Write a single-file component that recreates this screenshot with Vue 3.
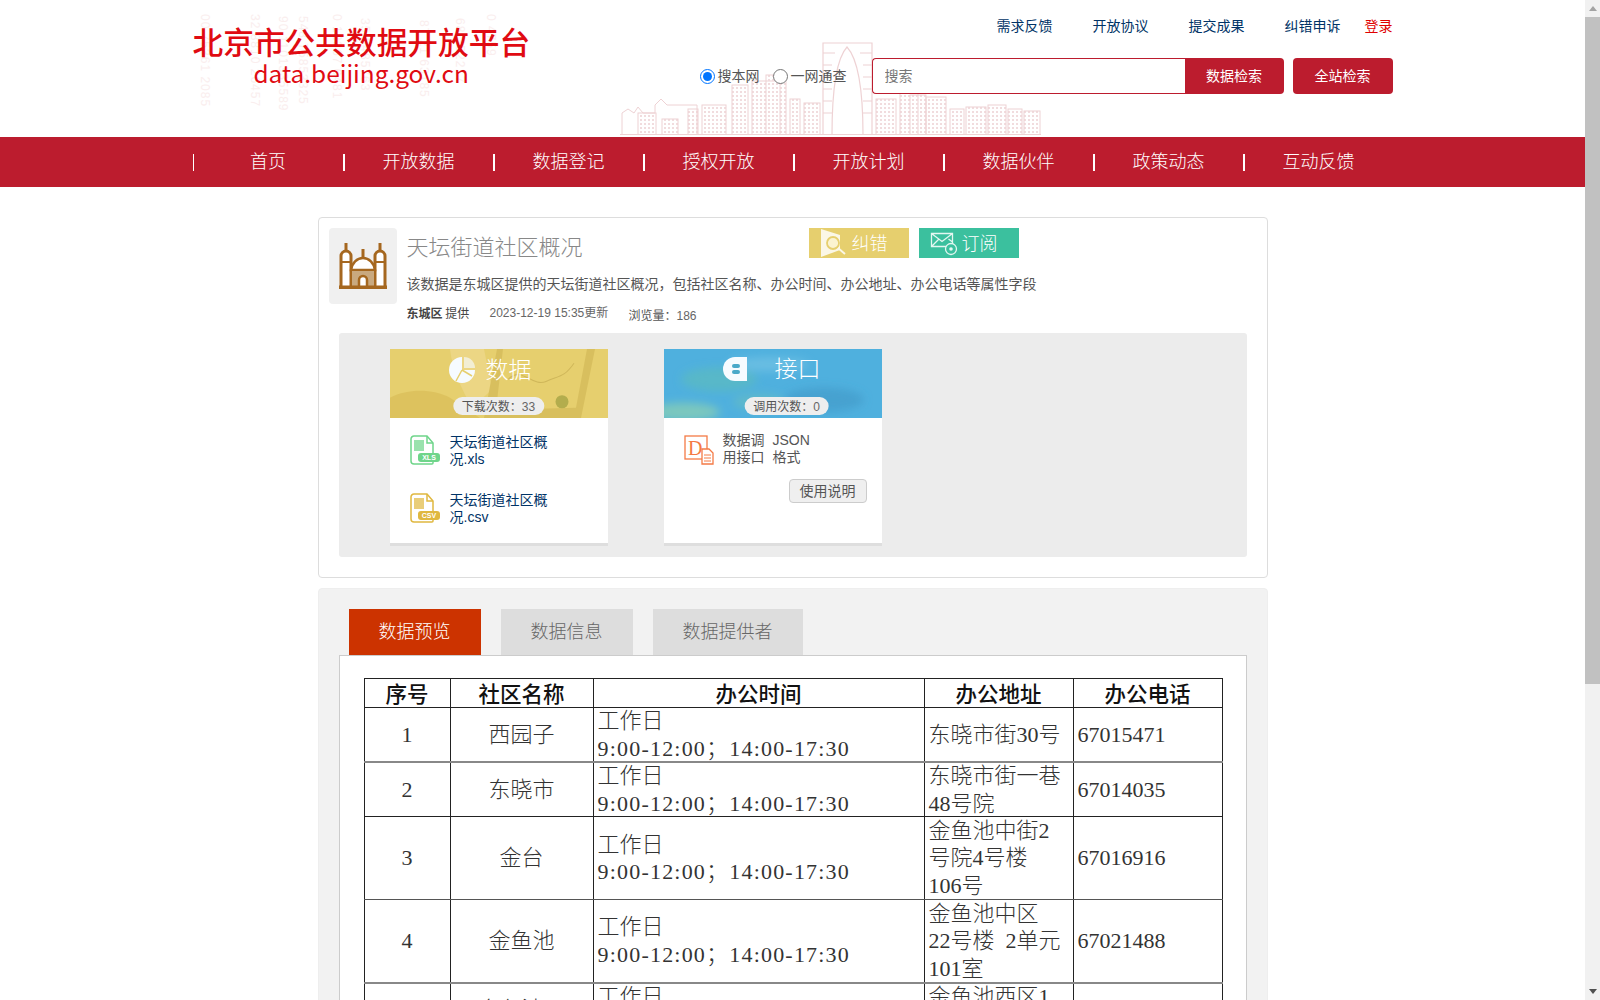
<template>
  <div class="page">
    <div class="main">
      <header class="top">
        <div class="top-inner">
          <!-- pale number streaks behind the logo -->
          <div class="streaks">
            <span v-for="s in streaks" :key="s.x" class="streak" :style="{ left: s.x + 'px', top: s.y + 'px' }">{{ s.t }}</span>
          </div>
          <svg class="skyline" viewBox="0 0 421 96" width="421" height="96">
            <defs>
              <pattern id="wins" width="4" height="4" patternUnits="userSpaceOnUse">
                <rect width="2" height="2" fill="#f1dcde" />
              </pattern>
            </defs>
            <rect v-for="(b, i) in buildings" :key="i" :x="b[0]" :y="b[1]" :width="b[2]" :height="96 - b[1]" fill="url(#wins)" stroke="#eed2d4" stroke-width="1" />
            <path d="M203 96V4h49v92M212 96C212 50 216 20 227 8C238 20 243 50 243 96M203 14h12M240 14h12M203 26h9M243 26h9M203 38h9M243 38h9M203 50h9M243 50h9M203 62h9M243 62h9M203 74h9M243 74h9" fill="#fff" stroke="#eed2d4" stroke-width="1.2" />
            <path d="M2 96V74l6-4 6 4 4-6 5 6h12V66l6-6 6 6h30v30M0 95.500h421" fill="none" stroke="#eed2d4" />
          </svg>

          <div class="logo">
            <div class="logo-cn">北京市公共数据开放平台</div>
            <div class="logo-en">data.beijing.gov.cn</div>
          </div>

          <div class="top-right">
            <nav class="links">
              <a v-for="l in topLinks" :key="l">{{ l }}</a>
              <a class="login">登录</a>
            </nav>
            <div class="search-row">
              <label class="radio"><input type="radio" name="scope" checked /><span>搜本网</span></label>
              <label class="radio"><input type="radio" name="scope" /><span>一网通查</span></label>
              <div class="search-box">
                <input type="text" placeholder="搜索" />
                <button>数据检索</button>
              </div>
              <button class="all-btn">全站检索</button>
            </div>
          </div>
        </div>
      </header>

      <div class="nav">
        <div class="nav-inner">
          <a v-for="n in navItems" :key="n">{{ n }}</a>
        </div>
      </div>

      <section class="card-top">
        <div class="intro">
          <div class="tile">
            <svg width="48" height="46" viewBox="0 0 48 46">
              <path d="M5.500 0h3v8h-3zM39.500 0h3v8h-3zM22.500 6h3v9h-3z" fill="#a5671f" />
              <path d="M2 44V13a5 5 0 0 1 10 0v31M36 44V13a5 5 0 0 1 10 0v31" fill="#fff" stroke="#a5671f" stroke-width="3" />
              <path d="M12 27c1-7 6-12 12-12s11 5 12 12z" fill="#fff" stroke="#a5671f" stroke-width="2.500" />
              <path d="M2 19h10M36 19h10" stroke="#a5671f" stroke-width="2" />
              <rect x="12" y="27" width="24" height="17" fill="#c9a97f" stroke="#a5671f" stroke-width="2" />
              <path d="M20 44V37a4 4 0 0 1 8 0v7" fill="#fff" stroke="#a5671f" stroke-width="2.500" />
              <rect x="0" y="42.500" width="48" height="3.500" fill="#a5671f" />
            </svg>
          </div>
          <div class="info">
            <div class="title-row">
              <h1>天坛街道社区概况</h1>
              <a class="act act-fix">
                <svg class="act-icon" width="30" height="30" viewBox="0 0 30 30">
                  <path d="M2 1l19 6v15L2 29z" fill="#fbf7e6" />
                  <circle cx="14" cy="15" r="6" fill="#fbf3d0" stroke="#e6cf6e" stroke-width="1.800" />
                  <path d="M19 20l7 6" stroke="#fbf7e6" stroke-width="2" />
                </svg>
                <span>纠错</span>
              </a>
              <a class="act act-sub">
                <svg class="act-icon" width="30" height="30" viewBox="0 0 30 30">
                  <path d="M2.500 5.500h21v13h-21zM2.500 5.500l10.500 8 10.500-8M2.500 18.500l7-7M23.500 14l-4-3" fill="none" stroke="#e4f7f1" stroke-width="1.300" />
                  <circle cx="22" cy="21" r="5.500" fill="#3bc09e" stroke="#e4f7f1" stroke-width="1.300" />
                  <circle cx="22" cy="21" r="1.800" fill="#e4f7f1" />
                </svg>
                <span>订阅</span>
              </a>
            </div>
            <p class="desc">该数据是东城区提供的天坛街道社区概况，包括社区名称、办公时间、办公地址、办公电话等属性字段</p>
            <div class="meta">
              <span class="org"><b>东城区</b> 提供</span>
              <span class="date">2023-12-19 15:35更新</span>
              <span class="views">浏览量：<b>186</b></span>
            </div>
          </div>
        </div>

        <div class="panel">
          <div class="res-card">
            <div class="res-head yellow">
              <svg class="res-bg" viewBox="0 0 218 68" preserveAspectRatio="none">
                <path d="M0 68V48c20-10 44-8 60 0l30 20z" fill="#ddc25e" />
                <path d="M60 0h34l8 40-20 18C72 40 62 20 60 0z" fill="#ecd684" />
                <path d="M107 0h98l-14 68H94z" fill="#d8bf5e" />
                <path d="M113 0h84l-11 58-80 2z" fill="#e6cf6e" />
                <path d="M118 30c14-14 24 8 38 2s18-4 28-18" fill="none" stroke="#cfb75a" />
                <circle cx="172" cy="52" r="6.500" fill="#b3ad4d" />
              </svg>
              <div class="res-title">
                <svg width="26" height="26" viewBox="0 0 26 26">
                  <path d="M13 0a13 13 0 1 0 13 13H13z" fill="#f6fbff" />
                  <path d="M15 0a11 11 0 0 1 11 11H15z" fill="#f6fbff" opacity=".65" />
                  <path d="M13 13l10 6M13 13L7 24" stroke="#e6cf6e" stroke-width="1.500" />
                </svg>
                <span>数据</span>
              </div>
              <div class="badge">下载次数：<b>33</b></div>
            </div>
            <div class="res-body">
              <a v-for="f in files" :key="f.ext" class="file-row">
                <svg width="30" height="30" viewBox="0 0 30 30">
                  <path d="M1 4a3 3 0 0 1 3-3h13l6 7v20a1 1 0 0 1-1 1H4a3 3 0 0 1-3-3z" fill="#fff" :stroke="f.color" stroke-width="1.500" />
                  <path d="M17 1v7h6" fill="none" :stroke="f.color" stroke-width="1.500" />
                  <rect x="4" y="5" width="10" height="11" :fill="f.color" opacity=".7" />
                  <rect x="8" y="18" width="22" height="9" rx="3" :fill="f.color" />
                  <text x="19" y="25" font-size="7" font-weight="700" text-anchor="middle" fill="#fff" font-family="Liberation Sans, sans-serif">{{ f.ext.toUpperCase() }}</text>
                </svg>
                <span class="file-name">天坛街道社区概况.{{ f.ext }}</span>
              </a>
            </div>
          </div>

          <div class="res-card">
            <div class="res-head blue">
              <svg class="res-bg" viewBox="0 0 218 68" preserveAspectRatio="none">
                <defs><filter id="blur1"><feGaussianBlur stdDeviation="4" /></filter></defs>
                <g filter="url(#blur1)">
                  <ellipse cx="55" cy="30" rx="38" ry="12" fill="#5fc0b4" opacity=".5" />
                  <ellipse cx="20" cy="62" rx="36" ry="9" fill="#8fd1b0" opacity=".7" />
                  <ellipse cx="160" cy="50" rx="40" ry="12" fill="#3f97c6" opacity=".6" />
                  <ellipse cx="105" cy="15" rx="40" ry="7" fill="#79c6e6" opacity=".6" />
                  <ellipse cx="95" cy="52" rx="26" ry="8" fill="#6ec2b8" opacity=".5" />
                </g>
              </svg>
              <div class="res-title">
                <svg width="24" height="24" viewBox="0 0 24 24">
                  <path d="M24 0H12A12 12 0 0 0 12 24h12z" fill="#f6fbff" />
                  <rect x="9" y="7" width="8" height="4" rx="2" fill="#4aa9c9" />
                  <rect x="9" y="13" width="8" height="4" rx="2" fill="#4aa9c9" />
                </svg>
                <span class="api-name">接口</span>
              </div>
              <div class="badge api-badge">调用次数：<b>0</b></div>
            </div>
            <div class="res-body api-body">
              <div class="api-row">
                <svg width="30" height="30" viewBox="0 0 30 30">
                  <rect x="1" y="1" width="22" height="23" fill="#fff" stroke="#f47a45" stroke-width="1.300" />
                  <text x="4" y="20" font-size="20" fill="#f47a45" font-family="Liberation Serif, serif">D</text>
                  <path d="M18 14h7l4 4v11H18z" fill="#fff" stroke="#f47a45" stroke-width="1.300" />
                  <path d="M20 20h7M20 23h7M20 26h7" stroke="#f47a45" />
                </svg>
                <span class="api-col first">数据调用接口</span>
                <span class="api-col">JSON 格式</span>
              </div>
              <div class="help-line"><button class="help">使用说明</button></div>
            </div>
          </div>
        </div>
      </section>

      <section class="card-bottom">
        <div class="tabs">
          <a v-for="(t, i) in tabs" :key="t" class="tab" :class="{ active: i === 0 }">{{ t }}</a>
        </div>
        <div class="tab-box">
          <table class="sheet">
            <colgroup>
              <col style="width: 86px" /><col style="width: 143px" /><col style="width: 331px" /><col style="width: 149px" /><col style="width: 149px" />
            </colgroup>
            <thead>
              <tr>
                <th v-for="h in heads" :key="h">{{ h }}</th>
              </tr>
            </thead>
            <tbody>
              <tr v-for="r in rows" :key="r.no" :class="r.line" :style="{ height: r.h + 'px' }">
                <td class="c">{{ r.no }}</td>
                <td class="c">{{ r.name }}</td>
                <td class="l"><div class="stack">工作日<br /><span class="time">9:00-12:00；14:00-17:30</span></div></td>
                <td class="l"><div class="stack"><template v-for="(a, i) in r.addr" :key="i"><br v-if="i" />{{ a }}</template></div></td>
                <td class="l">{{ r.tel }}</td>
              </tr>
            </tbody>
          </table>
        </div>
      </section>
    </div>

    <div class="scrollbar">
      <div class="sb-btn"><i class="up"></i></div>
      <div class="sb-thumb"></div>
      <div class="sb-rest"></div>
      <div class="sb-btn"><i class="down"></i></div>
    </div>
  </div>
</template>

<script setup>
const topLinks = ['需求反馈', '开放协议', '提交成果', '纠错申诉']
const navItems = ['首页', '开放数据', '数据登记', '授权开放', '开放计划', '数据伙伴', '政策动态', '互动反馈']
const tabs = ['数据预览', '数据信息', '数据提供者']
const heads = ['序号', '社区名称', '办公时间', '办公地址', '办公电话']

const streaks = [
  { x: 5, y: 14, t: '00 75361 2085' },
  { x: 55, y: 14, t: '32 8810 26457' },
  { x: 83, y: 16, t: '90 1101335589' },
  { x: 103, y: 16, t: '548 75853325' },
  { x: 137, y: 14, t: '0 12367 6481' },
  { x: 165, y: 18, t: '35 5485763' },
  { x: 224, y: 20, t: '87 21 63185' },
  { x: 260, y: 18, t: '68 352217' },
  { x: 291, y: 14, t: '0 4759' }
]

const buildings = [
  [18, 74, 18, 22], [42, 80, 16, 16], [68, 70, 10, 26], [82, 66, 24, 30], [112, 46, 16, 50],
  [132, 42, 34, 54], [146, 36, 14, 60], [170, 60, 10, 36], [184, 64, 16, 32], [256, 60, 20, 36],
  [280, 52, 18, 44], [290, 56, 16, 40], [306, 58, 20, 38], [330, 70, 14, 26], [346, 68, 20, 28],
  [368, 66, 18, 30], [388, 70, 14, 26], [404, 72, 16, 24]
]

const files = [
  { ext: 'xls', color: '#6fd58a' },
  { ext: 'csv', color: '#e0b840' }
]

const rows = [
  { no: 1, name: '西园子', addr: ['东晓市街30号'], tel: '67015471', h: 54, line: 'gray' },
  { no: 2, name: '东晓市', addr: ['东晓市街一巷', '48号院'], tel: '67014035', h: 54, line: 'dark' },
  { no: 3, name: '金台', addr: ['金鱼池中街2', '号院4号楼', '106号'], tel: '67016916', h: 83, line: 'soft' },
  { no: 4, name: '金鱼池', addr: ['金鱼池中区', '22号楼  2单元', '101室'], tel: '67021488', h: 83, line: 'gray' },
  { no: 5, name: '金鱼池西', addr: ['金鱼池西区1', '号楼'], tel: '67021500', h: 54, line: 'dark' }
]
</script>

<style scoped>
.page {
  display: flex;
  width: 1600px;
  height: 1000px;
  overflow: hidden;
  background: #fff;
  font-family: "Noto Sans CJK SC", sans-serif;
  color: #555;
}

.main {
  width: 1585px;
  flex: none;
}

.top-inner {
  position: relative;
  width: 1200px;
  height: 137px;
  margin: 0 auto;
  display: flex;
  justify-content: space-between;
}

.streaks {
  position: absolute;
  left: 0;
  top: 0;
}

.streak {
  position: absolute;
  writing-mode: vertical-rl;
  font: 12px "Liberation Sans", sans-serif;
  color: #faeeee;
  letter-spacing: 1px;
  white-space: nowrap;
}

.skyline {
  position: absolute;
  left: 427px;
  top: 39px;
}

.logo {
  position: relative;
  padding-top: 20px;
}

.logo-cn {
  font-size: 30.700px;
  font-weight: 500;
  line-height: 42px;
  color: #e00b12;
  white-space: nowrap;
}

.logo-en {
  margin: -5px 0 0 61px;
  font-size: 24.400px;
  line-height: 32px;
  color: #e00b12;
  white-space: nowrap;
}

.top-right {
  position: relative;
  display: flex;
  flex-direction: column;
  align-items: flex-end;
}

.links {
  display: flex;
  height: 20px;
  margin-top: 15px;
  font-size: 14px;
  line-height: 20px;
  color: #003366;
}

.links a {
  margin-left: 40px;
  white-space: nowrap;
}

.links a.login {
  margin-left: 24px;
  color: #e00000;
}

.search-row {
  display: flex;
  align-items: center;
  margin-top: 23px;
}

.radio {
  display: flex;
  align-items: center;
  margin-right: 13px;
  font-size: 14px;
  color: #555;
  white-space: nowrap;
}

.radio input {
  width: 15px;
  height: 15px;
  margin: 0 3px 0 0;
}

.radio span {
  margin-top: -2px;
}

.search-box {
  display: flex;
  width: 412px;
  height: 36px;
  margin-left: 12px;
}

.search-box input {
  flex: 1;
  min-width: 0;
  box-sizing: border-box;
  height: 36px;
  padding: 0 12px 2px;
  border: 1px solid #bc1c2e;
  border-right: 0;
  border-radius: 4px 0 0 4px;
  outline: 0;
  background: #fff;
  font: 14px "Noto Sans CJK SC", sans-serif;
}

.search-box input::placeholder {
  color: #777;
}

.search-box button,
.all-btn {
  height: 36px;
  padding: 0 0 2px;
  border: 0;
  background: #bc1c2e;
  color: #fff;
  font: 14px "Noto Sans CJK SC", sans-serif;
}

.search-box button {
  width: 99px;
  border-radius: 0 4px 4px 0;
}

.all-btn {
  width: 100px;
  margin-left: 9px;
  border-radius: 4px;
}

.nav {
  height: 50px;
  background: #bc1c2e;
}

.nav-inner {
  display: flex;
  width: 1200px;
  height: 50px;
  margin: 0 auto;
  align-items: center;
}

.nav-inner a {
  width: 150px;
  height: 17px;
  border-left: 2px solid #fff;
  box-sizing: border-box;
  font-size: 18px;
  font-weight: 300;
  line-height: 13px;
  text-align: center;
  color: #fff;
}

.nav-inner a:first-child {
  border-left-width: 1px;
}

.card-top {
  box-sizing: border-box;
  width: 950px;
  height: 361px;
  margin: 30px auto 0;
  padding: 10px;
  border: 1px solid #ddd;
  border-radius: 4px;
  background: #fff;
}

.intro {
  display: flex;
}

.tile {
  display: flex;
  align-items: center;
  justify-content: center;
  flex: none;
  width: 68px;
  height: 76px;
  border-radius: 4px;
  background: #f0f0f0;
}

.info {
  margin-left: 10px;
}

.title-row {
  display: flex;
  height: 30px;
  align-items: flex-start;
}

.title-row h1 {
  width: 402px;
  margin: 0;
  padding-top: 1px;
  font-size: 22px;
  font-weight: 300;
  line-height: 32px;
  color: #888;
}

.act {
  display: flex;
  align-items: center;
  width: 100px;
  height: 30px;
  margin-right: 10px;
  font-size: 18px;
  font-weight: 300;
  color: #fff;
}

.act span {
  margin: -3px 0 0 3px;
}

.act-icon {
  margin-left: 10px;
  flex: none;
}

.act-fix {
  background: #e6cf6e;
}

.act-sub {
  background: #3bc09e;
}

.desc {
  margin: 15px 0 0;
  font-size: 14px;
  line-height: 20px;
  color: #555;
  white-space: nowrap;
}

.meta {
  display: flex;
  height: 16px;
  margin-top: 12px;
  font-size: 12px;
  line-height: 16px;
}

.org {
  width: 83px;
  color: #444;
}

.date {
  width: 139px;
  font-family: "Liberation Sans", "Noto Sans CJK SC", sans-serif;
  color: #666;
}

.views {
  padding-top: 2px;
  color: #555;
}

.views b {
  font-family: "Liberation Sans", sans-serif;
  font-weight: 400;
  color: #666;
}

.panel {
  display: flex;
  box-sizing: border-box;
  height: 224px;
  margin: 12px 0 0 10px;
  width: 908px;
  padding: 16px 51px;
  gap: 56px;
  border-radius: 3px;
  background: #ececec;
}

.res-card {
  box-sizing: border-box;
  width: 218px;
  height: 197px;
  border-bottom: 3px solid #dedede;
  background: #fff;
}

.res-head {
  position: relative;
  height: 69px;
  overflow: hidden;
}

.yellow {
  background: #e6cf6e;
}

.blue {
  background: #4fb0de;
}

.res-bg {
  position: absolute;
  left: 0;
  top: 0;
  width: 100%;
  height: 100%;
}

.res-title {
  position: absolute;
  top: 8px;
  left: 59px;
  display: flex;
  align-items: center;
  gap: 11px;
  color: #fff;
  font-size: 23px;
  font-weight: 300;
  line-height: 26px;
}

.res-title span {
  margin-top: -4px;
}

.res-title .api-name {
  margin-left: 17px;
}

.badge {
  position: absolute;
  left: 50%;
  bottom: 3px;
  transform: translateX(-50%);
  height: 18px;
  padding: 0 9px;
  border-radius: 9px;
  background: #eee;
  font-size: 12px;
  line-height: 17px;
  color: #555;
  white-space: nowrap;
}

.badge.api-badge {
  left: calc(50% + 14px);
}

.badge b {
  font: 12px/17px "Liberation Sans", sans-serif;
  color: #666;
}

.res-body {
  padding: 16px 20px 0;
}

.file-row {
  display: flex;
  height: 58px;
  align-items: flex-start;
}

.file-row svg {
  flex: none;
  margin-top: 1px;
}

.file-name {
  width: 100px;
  margin-left: 10px;
  font-family: "Liberation Sans", "Noto Sans CJK SC", sans-serif;
  font-size: 14px;
  line-height: 16.500px;
  color: #003366;
  word-break: break-all;
}

.api-body {
  padding-top: 14px;
}

.api-row {
  display: flex;
  height: 47px;
}

.api-row svg {
  flex: none;
  margin-top: 3px;
}

.api-col {
  width: 42px;
  margin-left: 8px;
  font-family: "Liberation Sans", "Noto Sans CJK SC", sans-serif;
  font-size: 14px;
  line-height: 16.500px;
  color: #555;
  word-break: break-all;
}

.api-col.first {
  margin-left: 9px;
}

.help-line {
  display: flex;
  justify-content: flex-end;
  margin-right: -5px;
}

.help {
  box-sizing: border-box;
  width: 78px;
  height: 24px;
  padding: 0 0 2px;
  border: 1px solid #ccc;
  border-radius: 4px;
  background: #efefef;
  font: 14px "Noto Sans CJK SC", sans-serif;
  color: #555;
}

.card-bottom {
  box-sizing: border-box;
  width: 950px;
  margin: 10px auto 0;
  padding: 20px 20px 40px;
  border: 1px solid #eee;
  border-radius: 4px;
  background: #f2f2f2;
}

.tabs {
  display: flex;
  gap: 20px;
  margin-left: 10px;
}

.tab {
  height: 46px;
  padding: 0 30px;
  background: #ddd;
  font-size: 18px;
  font-weight: 300;
  line-height: 42px;
  color: #666;
}

.tab.active {
  background: #cc3300;
  color: #fff;
}

.tab-box {
  padding: 22px 24px 40px;
  border: 1px solid #ccc;
  background: #fff;
}

.sheet {
  width: 858px;
  table-layout: fixed;
  border-collapse: collapse;
  font-family: "Liberation Serif", "Noto Sans CJK SC", serif;
  font-size: 22px;
  font-weight: 300;
  color: #333;
}

.sheet th,
.sheet td {
  box-sizing: border-box;
  padding: 0;
  border: 1px solid #222;
}

.sheet th {
  height: 28px;
  font-family: "Noto Sans CJK SC", sans-serif;
  font-size: 21.500px;
  font-weight: 500;
  line-height: 28px;
  color: #111;
  vertical-align: bottom;
}

.sheet td {
  line-height: 27.500px;
  vertical-align: middle;
}

.sheet td.c {
  text-align: center;
}

.sheet td.l {
  padding-left: 4px;
  white-space: pre;
}

.sheet tr.gray td {
  border-bottom: 2px solid #888;
}

.sheet tr.soft td {
  border-bottom: 1px solid #555;
}

.stack {
  margin: -1px 0;
}

.time {
  letter-spacing: 1.200px;
}

.scrollbar {
  display: flex;
  flex-direction: column;
  flex: none;
  width: 15px;
  background: #f1f1f1;
}

.sb-btn {
  display: flex;
  align-items: center;
  justify-content: center;
  height: 17px;
  flex: none;
}

.sb-btn i {
  width: 0;
  height: 0;
  border-left: 4px solid transparent;
  border-right: 4px solid transparent;
}

.sb-btn i.up {
  border-bottom: 5px solid #a3a3a3;
}

.sb-btn i.down {
  border-top: 5px solid #505050;
}

.sb-thumb {
  height: 667px;
  flex: none;
  background: #c1c1c1;
}

.sb-rest {
  flex: 1;
}
</style>

<style>
html,
body {
  margin: 0;
  overflow: hidden;
}
</style>
